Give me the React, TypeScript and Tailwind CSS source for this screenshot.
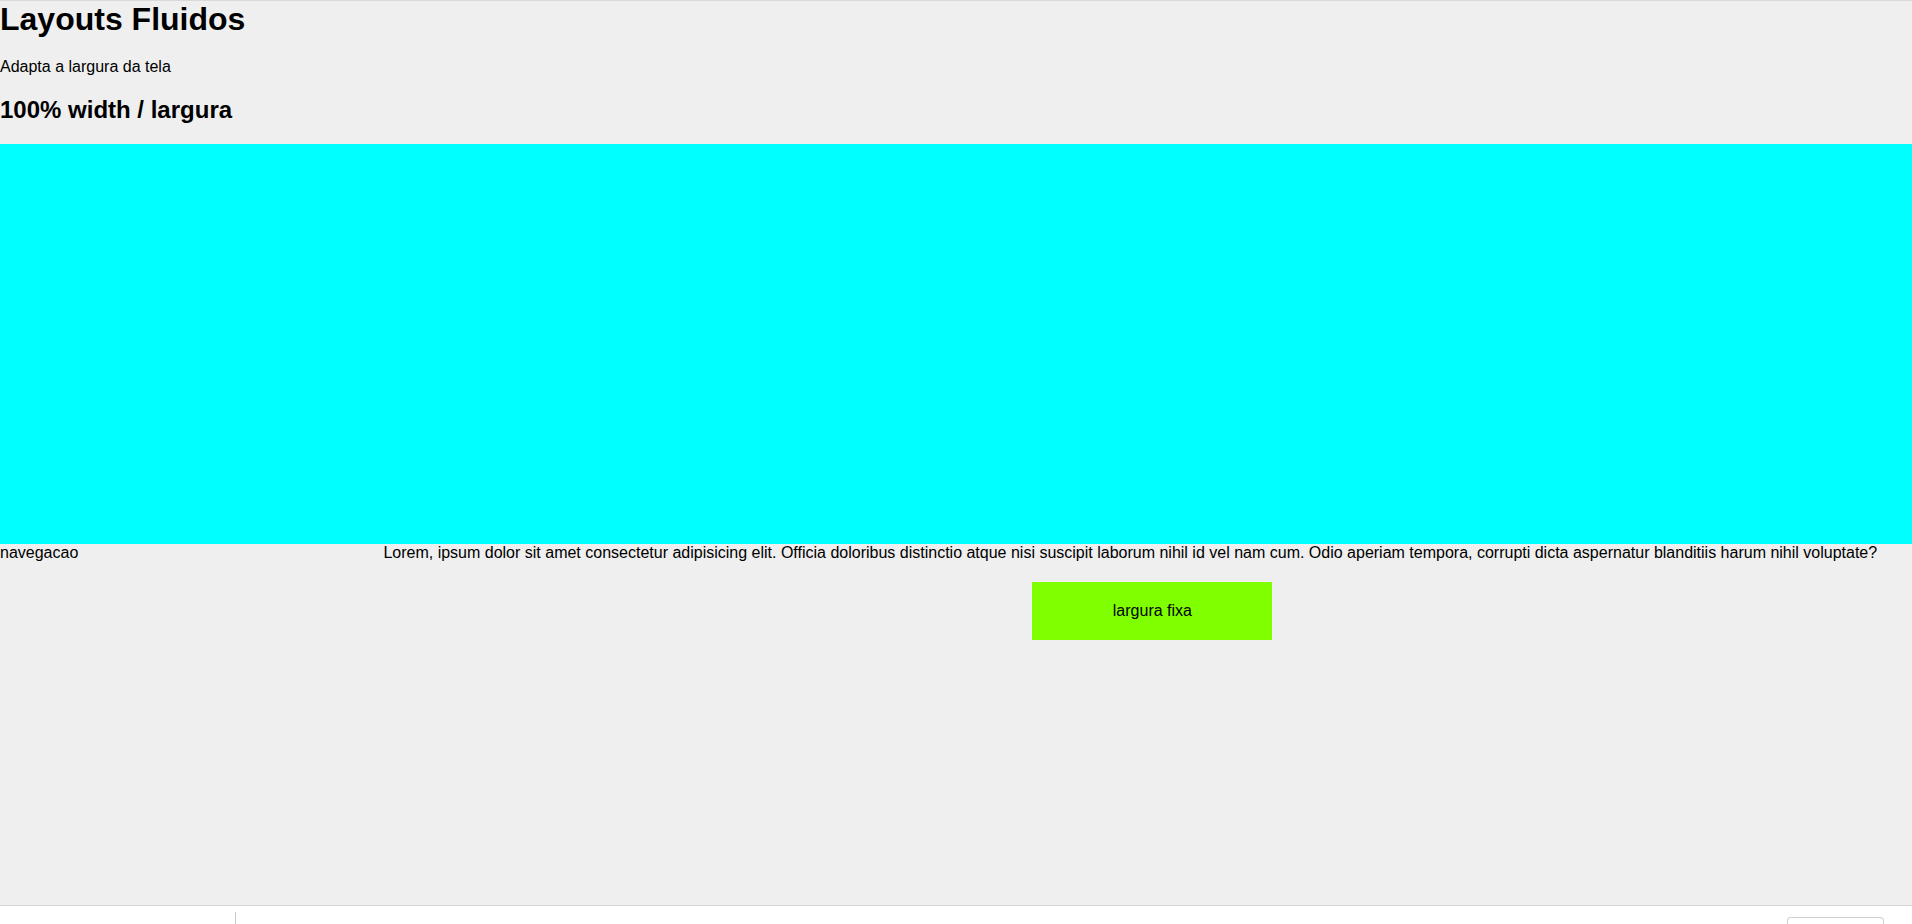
import React from 'react';

const lorem =
  'Lorem, ipsum dolor sit amet consectetur adipisicing elit. Officia doloribus distinctio atque nisi suscipit laborum nihil id vel nam cum. Odio aperiam tempora, corrupti dicta aspernatur blanditiis harum nihil voluptate?';

export default function App() {
  return (
    <div className="flex flex-col h-[924px] overflow-hidden font-['Liberation_Sans',Arial,sans-serif] text-black text-[16px] leading-[normal]">
      <div className="flex-1 bg-[#efefef] border-t border-[#d9d9d9]">
        <h1 className="text-[32px] font-bold leading-[normal] mb-[20px]">Layouts Fluidos</h1>
        <p className="mb-[20px]">Adapta a largura da tela</p>
        <h2 className="text-[24px] font-bold leading-[normal] mb-[20px]">100% width / largura</h2>
        <div className="w-full h-[400px] bg-[#00ffff]" />
        <div className="flex">
          <nav className="w-[20%]">navegacao</nav>
          <main className="w-[80%] pl-[1px]">
            <div>{lorem}</div>
            <div className="w-[240px] ml-[649px] mt-[20px] py-[20px] bg-[#7fff00] text-center">largura fixa</div>
          </main>
        </div>
      </div>
      <footer className="h-[19px] shrink-0 bg-white border-t border-[#d6d6d6] flex items-end">
        <div className="w-[236px] h-[12px] border-r border-[#c8c8c8]" />
        <div className="flex-1" />
        <div className="w-[97px] h-[7px] mr-[28px] border border-b-0 border-[#d0d0d0] rounded-t-[4px]" />
      </footer>
    </div>
  );
}
